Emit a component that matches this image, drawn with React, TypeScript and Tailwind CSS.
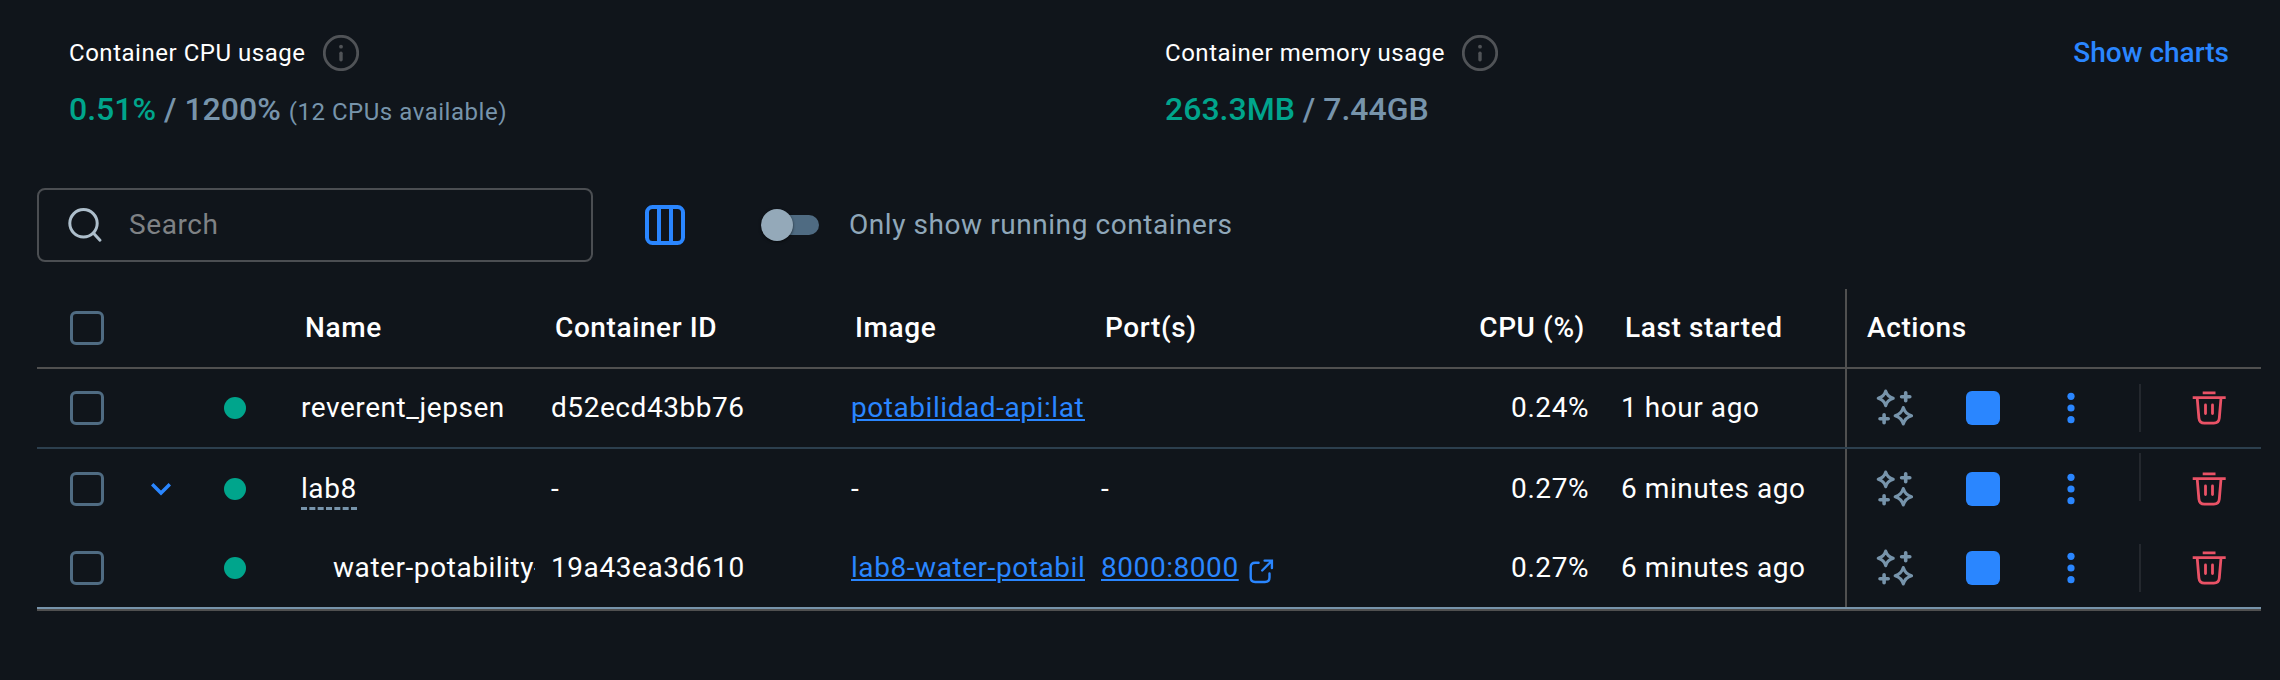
import React from "react";
import clsx from "clsx";

const GRID = "grid grid-cols-[256px_250px_300px_250px_264px_240px_248px_1fr]";

function InfoIcon() {
  return (
    <svg className="h-9 w-9 text-[#505357]" viewBox="0 0 36 36" fill="none" stroke="currentColor">
      <circle cx="18" cy="18" r="16.7" strokeWidth="2.8" />
      <path d="M18 18.2v6.6" strokeWidth="3.4" strokeLinecap="round" />
      <circle cx="18" cy="11.7" r="1.9" fill="currentColor" stroke="none" />
    </svg>
  );
}

function SearchIcon() {
  return (
    <svg className="h-9 w-9 text-[#adbecb]" viewBox="0 0 36 36" fill="none" stroke="currentColor" strokeWidth="3" strokeLinecap="round">
      <circle cx="16.5" cy="16.3" r="13.7" />
      <path d="M26.3 26l6.7 7.2" />
    </svg>
  );
}

function ColumnsIcon() {
  return (
    <svg className="h-10 w-10 text-[#2a86ff]" viewBox="0 0 40 40" fill="none" stroke="currentColor" strokeWidth="4">
      <rect x="2" y="2" width="36" height="36" rx="5.5" />
      <path d="M14 2v36M26 2v36" />
    </svg>
  );
}

function SparklesIcon() {
  return (
    <svg className="h-[38px] w-[38px] text-[#7794ab]" viewBox="0 0 38 38" fill="none" stroke="currentColor" strokeLinejoin="round" strokeLinecap="round">
      <path strokeWidth="3.2" d="M9.7 2.1Q11.2 7.4 17.2 9.3Q11.2 11.2 9.7 16.6Q8.2 11.2 2.3 9.3Q8.2 7.4 9.7 2.1Z" />
      <path strokeWidth="3.2" d="M27.3 18.6Q29.2 24.8 35.5 26.7Q29.2 28.6 27.3 34.9Q25.4 28.6 19.2 26.7Q25.4 24.8 27.3 18.6Z" />
      <path strokeWidth="3.6" d="M29.7 3.7v8M25.6 7.7h8.2M8.1 25.7v8M4 29.7h8.2" />
    </svg>
  );
}

function MoreIcon() {
  return (
    <svg className="h-[34px] w-[34px] text-[#2a86ff]" viewBox="0 0 34 34" fill="currentColor">
      <circle cx="17" cy="5.3" r="3.6" />
      <circle cx="17" cy="17" r="3.6" />
      <circle cx="17" cy="28.7" r="3.6" />
    </svg>
  );
}

function TrashIcon() {
  return (
    <svg className="h-[34px] w-[34px] text-[#ea5266]" viewBox="0 0 34 34" fill="none" stroke="currentColor" strokeWidth="2.8">
      <path d="M10.7 1.9h12.8M.7 6.6h33" />
      <path d="M5.2 7L6.9 27.2Q7.4 32.2 12.4 32.2H21.8Q26.8 32.2 27.3 27.2L29 7" />
      <path d="M13.5 14v8.6M20.5 14v8.6" strokeLinecap="round" />
    </svg>
  );
}

function ExternalIcon() {
  return (
    <svg className="h-[25px] w-[25px] shrink-0 text-[#2a86ff]" viewBox="0 0 25 25" fill="none" stroke="currentColor" strokeWidth="2.4" strokeLinecap="round">
      <path d="M9.6 3.7H6.2Q1.7 3.7 1.7 8.2V18.5Q1.7 23 6.2 23H16Q20.5 23 20.5 18.5V14.4" />
      <path d="M13.2 11.5L22.6 2M15.6 1.6H22.9V9" />
    </svg>
  );
}

function Checkbox() {
  return <span className="h-[34px] w-[34px] shrink-0 rounded-[6px] border-[3px] border-[#4f6b82]" />;
}

type Row = {
  name: string;
  id: string;
  image: string;
  port?: string;
  cpu: string;
  started: string;
  kind: "single" | "group" | "child";
};

const ROWS: Row[] = [
  { name: "reverent_jepsen", id: "d52ecd43bb76", image: "potabilidad-api:latest", cpu: "0.24%", started: "1 hour ago", kind: "single" },
  { name: "lab8", id: "-", image: "-", port: "-", cpu: "0.27%", started: "6 minutes ago", kind: "group" },
  { name: "water-potability-1", id: "19a43ea3d610", image: "lab8-water-potability", port: "8000:8000", cpu: "0.27%", started: "6 minutes ago", kind: "child" },
];

const LINK = "text-[#2a86ff] underline decoration-2 underline-offset-[2px]";

function TableRow({ row }: { row: Row }) {
  const group = row.kind === "group";
  return (
    <div
      className={clsx(
        GRID,
        "h-20 text-[28px] tracking-[0.56px] text-white",
        row.kind === "single" && "border-b-2 border-[#2c3f4e]",
        row.kind === "child" && "border-b-2 border-[#7794ab]",
      )}
    >
      <div className="flex items-center pl-[33px]">
        <Checkbox />
        <span className="flex w-[120px] pl-[47px]">
          {group && (
            <svg className="h-3.5 w-[20px] text-[#2a86ff]" viewBox="0 0 20 14" fill="none" stroke="currentColor" strokeWidth="3.4">
              <path d="M1.2 2.2L10 11L18.8 2.2" />
            </svg>
          )}
        </span>
        <span className="h-[22px] w-[22px] rounded-full bg-[#00a58c]" />
      </div>
      <div className="flex items-center px-2">
        <span className={clsx("relative whitespace-nowrap", row.kind === "child" && "ml-8", !group && "overflow-hidden")}>
          {row.name}
          {group && <span className="absolute inset-x-0 top-[39px] border-b-[3px] border-dashed border-[#7794ab]" />}
        </span>
      </div>
      <div className="flex items-center px-2">{row.id}</div>
      <div className="flex items-center px-2">
        <span className={clsx("overflow-hidden whitespace-nowrap", row.image !== "-" && LINK)}>{row.image}</span>
      </div>
      <div className="flex items-center gap-[10px] px-2">
        <span className={clsx(row.kind === "child" && LINK)}>{row.port}</span>
        {row.kind === "child" && (
          <span className="pt-1.5">
            <ExternalIcon />
          </span>
        )}
      </div>
      <div className="flex items-center justify-end pr-2">{row.cpu}</div>
      <div className="flex items-center whitespace-nowrap pl-6">{row.started}</div>
      <div className="flex items-center border-l-2 border-[#505050] pl-[29px]">
        <SparklesIcon />
        <span className="ml-[52px] h-[34px] w-[34px] rounded-[6px] bg-[#2a86ff]" />
        <span className="ml-[54px]">
          <MoreIcon />
        </span>
        <span className={clsx("ml-[51px] h-12 w-0.5 bg-[#24282e]", group && "mt-1 self-start")} />
        <span className="ml-[51px]">
          <TrashIcon />
        </span>
      </div>
    </div>
  );
}

export default function App() {
  return (
    <div className="h-[680px] w-[2280px] overflow-hidden bg-[#10151b] pl-[37px] pr-[19px] font-['Roboto',sans-serif]">
      <div className="flex h-[188px] pl-8 pr-8 pt-8">
        <div className="w-[1096px]">
          <div className="flex h-[42px] items-center gap-[17px] text-2xl tracking-[0.53px] text-white">
            Container CPU usage
            <InfoIcon />
          </div>
          <div className="flex items-baseline whitespace-pre pt-[16px] text-[32px] leading-[38px] font-medium text-[#7794ab]">
            <span className="text-[#00a58c]">0.51%</span>
            <span> / 1200% </span>
            <span className="text-2xl font-normal tracking-[0.53px]">(12 CPUs available)</span>
          </div>
        </div>
        <div className="grow">
          <div className="flex h-[42px] items-center gap-[17px] text-2xl tracking-[0.53px] text-white">
            Container memory usage
            <InfoIcon />
          </div>
          <div className="flex items-baseline whitespace-pre pt-[16px] text-[32px] leading-[38px] font-medium text-[#7794ab]">
            <span className="text-[#00a58c]">263.3MB</span>
            <span> / 7.44GB</span>
          </div>
        </div>
        <button className="flex h-[42px] items-center text-[28px] font-medium text-[#2a86ff]">Show charts</button>
      </div>

      <div className="flex h-[74px] items-center">
        <div className="flex h-full w-[556px] items-center gap-[26px] rounded-[8px] border-2 border-[#4b4e52] pl-7">
          <SearchIcon />
          <span className="text-[28px] tracking-[0.6px] text-[#7f8285]">Search</span>
        </div>
        <span className="ml-[52px]">
          <ColumnsIcon />
        </span>
        <div className="ml-[78px] flex h-5 w-14 items-center rounded-full bg-[#4f6b82]">
          <span className="-ml-0.5 h-8 w-8 shrink-0 rounded-full bg-[#94a9b9] shadow-sm shadow-black/50" />
        </div>
        <span className="ml-[30px] text-[28px] tracking-[0.56px] text-[#8fa7b9]">Only show running containers</span>
      </div>

      <div className="mt-[27px] border-b-2 border-[#505050]">
        <div className={clsx(GRID, "h-20 border-b-2 border-[#505050] text-[28px] font-medium tracking-[0.6px] text-white")}>
          <div className="flex items-center pl-[33px]">
            <Checkbox />
          </div>
          <div className="flex items-center pl-3">Name</div>
          <div className="flex items-center pl-3">Container ID</div>
          <div className="flex items-center pl-3">Image</div>
          <div className="flex items-center pl-3">Port(s)</div>
          <div className="flex items-center justify-end pr-3">CPU (%)</div>
          <div className="flex items-center pl-7">Last started</div>
          <div className="flex items-center border-l-2 border-[#505050] pl-5">Actions</div>
        </div>
        {ROWS.map((row) => (
          <TableRow key={row.name} row={row} />
        ))}
      </div>
    </div>
  );
}
